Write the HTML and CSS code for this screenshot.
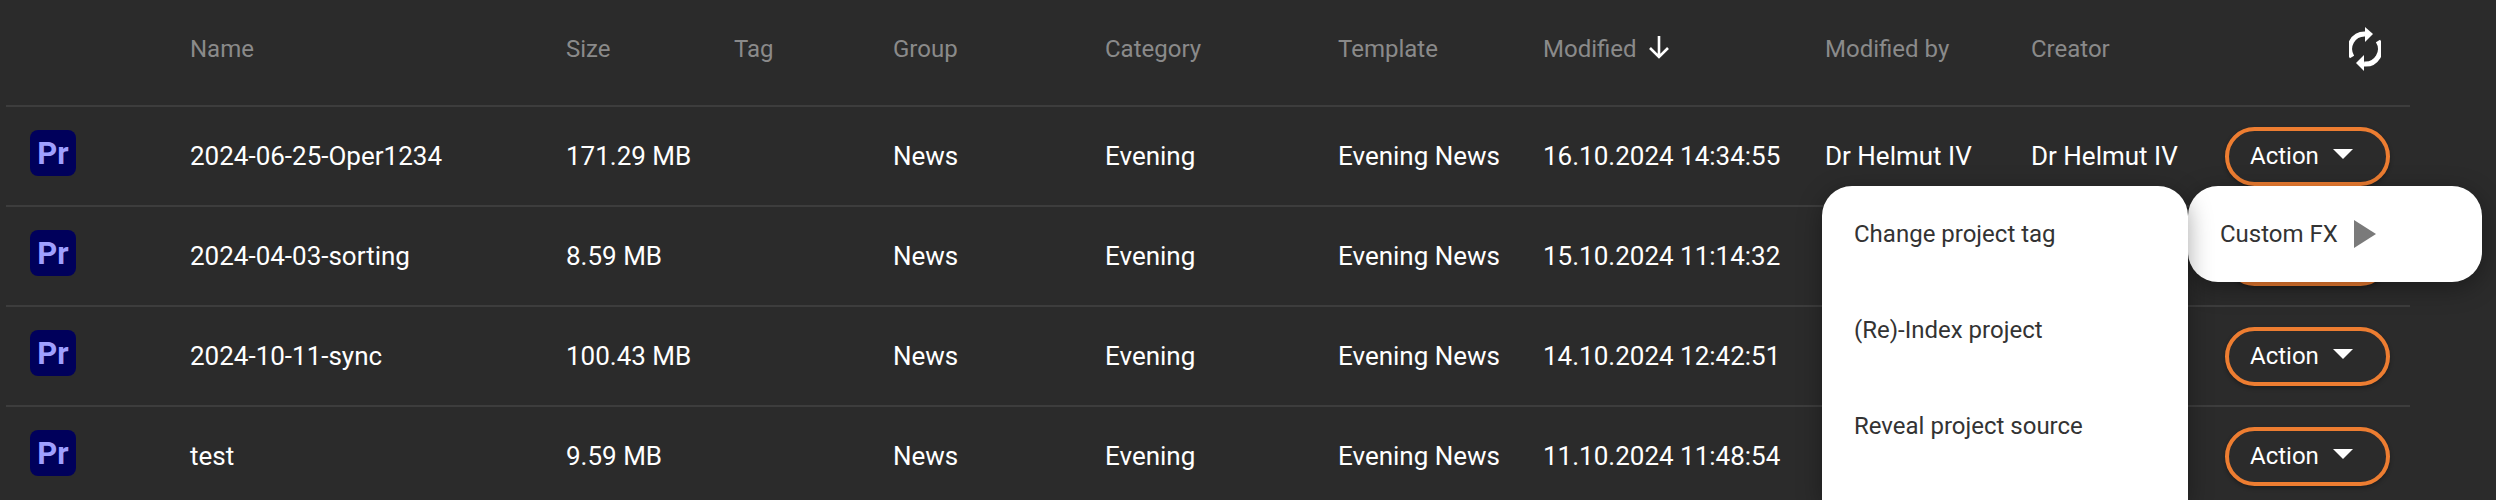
FILE: index.html
```html
<!DOCTYPE html>
<html>
<head>
  <title>Projects</title>
  <link rel="stylesheet" href="styles.css">
</head>
<body>
  <div class="list">
    <div class="row head">
      <div></div>
      <div>Name</div>
      <div>Size</div>
      <div>Tag</div>
      <div>Group</div>
      <div>Category</div>
      <div>Template</div>
      <div class="sorted">Modified
        <svg class="sort-arrow" width="24" height="26" viewBox="0 0 24 26"><path d="M12 2v21M3 14l9 9 9-9" fill="none" stroke="#fff" stroke-width="2.6"/></svg>
      </div>
      <div>Modified by</div>
      <div>Creator</div>
      <div class="refresh">
        <svg width="32" height="44" viewBox="0 0 32 44">
          <path d="M3 30A15 15 0 0 1 16 7" fill="none" stroke="#fff" stroke-width="5"/>
          <path d="M16 0l8 7-8 8z" fill="#fff"/>
          <path d="M29 14A15 15 0 0 1 15 37" fill="none" stroke="#fff" stroke-width="5"/>
          <path d="M15 28l-8 8 8 8z" fill="#fff"/>
        </svg>
      </div>
    </div>

    <div class="row">
      <div><span class="pr">Pr</span></div>
      <div>2024-06-25-Oper1234</div>
      <div>171.29 MB</div>
      <div></div>
      <div>News</div>
      <div>Evening</div>
      <div>Evening News</div>
      <div>16.10.2024 14:34:55</div>
      <div>Dr Helmut IV</div>
      <div>Dr Helmut IV</div>
      <div><button class="action">Action <span class="caret"></span></button></div>
    </div>

    <div class="row">
      <div><span class="pr">Pr</span></div>
      <div>2024-04-03-sorting</div>
      <div>8.59 MB</div>
      <div></div>
      <div>News</div>
      <div>Evening</div>
      <div>Evening News</div>
      <div>15.10.2024 11:14:32</div>
      <div>Dr Helmut IV</div>
      <div>Dr Helmut IV</div>
      <div><button class="action">Action <span class="caret"></span></button></div>
    </div>

    <div class="row">
      <div><span class="pr">Pr</span></div>
      <div>2024-10-11-sync</div>
      <div>100.43 MB</div>
      <div></div>
      <div>News</div>
      <div>Evening</div>
      <div>Evening News</div>
      <div>14.10.2024 12:42:51</div>
      <div>Dr Helmut IV</div>
      <div>Dr Helmut IV</div>
      <div><button class="action">Action <span class="caret"></span></button></div>
    </div>

    <div class="row">
      <div><span class="pr">Pr</span></div>
      <div>test</div>
      <div>9.59 MB</div>
      <div></div>
      <div>News</div>
      <div>Evening</div>
      <div>Evening News</div>
      <div>11.10.2024 11:48:54</div>
      <div>Dr Helmut IV</div>
      <div>Dr Helmut IV</div>
      <div><button class="action">Action <span class="caret"></span></button></div>
    </div>
  </div>

  <div class="submenu">
    <span>Custom FX</span>
    <span class="sub-arrow"></span>
  </div>

  <div class="menu">
    <div class="item">Change project tag</div>
    <div class="item">(Re)-Index project</div>
    <div class="item">Reveal project source</div>
  </div>
</body>
</html>
```
FILE: styles.css
```css
html, body {
  height: 500px;
  overflow: hidden;
}
body {
  margin: 0;
  background: #2b2b2b;
  color: #fff;
  font-family: Roboto, Arial, sans-serif;
  font-size: 26px;
}
.list {
  width: 2404px;
  height: 500px;
  margin-left: 6px;
  overflow: hidden;
}
.row {
  display: grid;
  grid-template-columns: 184px 376px 168px 159px 212px 233px 205px 282px 206px 174px 205px;
  align-items: center;
  height: 98px;
  border-bottom: 2px solid #3d3d3d;
}
.head {
  box-sizing: border-box;
  height: 107px;
  padding-bottom: 8px;
  color: #8a8a8a;
  font-size: 24px;
}
.sorted {
  display: flex;
  align-items: center;
  gap: 10px;
}
.sort-arrow {
  display: block;
  margin-top: -3px;
}
.refresh {
  padding-left: 144px;
  height: 44px;
}
.pr {
  display: flex;
  align-items: center;
  justify-content: center;
  width: 46px;
  height: 46px;
  margin: -6px 0 0 24px;
  border-radius: 8px;
  background: #00005b;
  color: #9f9fff;
  font-size: 31px;
  font-weight: 700;
}
.action {
  display: flex;
  align-items: center;
  box-sizing: border-box;
  width: 165px;
  height: 59px;
  margin-left: 20px;
  padding: 0 0 0 21px;
  background: none;
  border: 4px solid #ed7d31;
  border-radius: 30px;
  color: #fff;
  font: inherit;
  font-size: 24px;
  box-shadow: 0 2px 4px rgba(0, 0, 0, 0.3);
}
.caret {
  width: 0;
  height: 0;
  margin: -4px 0 0 14px;
  border-left: 10px solid transparent;
  border-right: 10px solid transparent;
  border-top: 10px solid #fff;
}
.menu {
  position: absolute;
  left: 1822px;
  top: 186px;
  width: 366px;
  height: 314px;
  background: #fff;
  border-radius: 30px 30px 0 0;
  color: #333;
  font-size: 24px;
  box-shadow: 0 6px 24px rgba(0, 0, 0, 0.35);
}
.item {
  display: flex;
  align-items: center;
  height: 96px;
  padding-left: 32px;
}
.submenu {
  position: absolute;
  left: 2188px;
  top: 186px;
  display: flex;
  align-items: center;
  box-sizing: border-box;
  width: 294px;
  height: 96px;
  padding-left: 32px;
  background: #fff;
  border-radius: 30px;
  color: #333;
  font-size: 24px;
  box-shadow: 0 6px 24px rgba(0, 0, 0, 0.35);
}
.sub-arrow {
  width: 0;
  height: 0;
  margin-left: 16px;
  border-top: 14px solid transparent;
  border-bottom: 14px solid transparent;
  border-left: 22px solid #7a7a7a;
}
```
